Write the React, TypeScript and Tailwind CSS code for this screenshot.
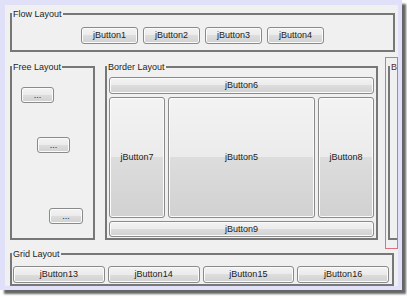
import type { ReactNode } from 'react';

type GroupProps = {
  title: string;
  className?: string;
  children?: ReactNode;
};

function Group({ title, className = '', children }: GroupProps) {
  return (
    <fieldset className={`border-2 border-[#777777] ${className}`}>
      <legend className="px-[1px] text-[9px] leading-[10px] text-[#1e1e1e]">
        {title}
      </legend>
      {children}
    </fieldset>
  );
}

type BtnProps = {
  label: string;
  className?: string;
};

function Btn({ label, className = '' }: BtnProps) {
  return (
    <button
      type="button"
      className={`flex items-center justify-center rounded-[3px] border border-[#8a8a8a] bg-[linear-gradient(#f3f3f3,#ebebeb_50%,#dddddd_50%,#d1d1d1)] shadow-[inset_0_0_0_1px_#fbfbfb] text-[9px] leading-none text-[#222222] ${className}`}
    >
      {label}
    </button>
  );
}

export default function App() {
  return (
    <div className="h-[298px] w-[407px] bg-white font-['Liberation_Sans',Arial,sans-serif]">
      <div className="h-[290px] w-[402px] bg-[#e0e0f8] pt-[5px] pl-[5px] shadow-[4px_4px_2px_#666666]">
        <div className="h-[281px] w-[393px] bg-[#f0f0f0] pt-[4px]">
          {/* flow */}
          <Group title="Flow Layout" className="ml-[5px] h-[43px] w-[385px]">
            <div className="flex justify-center gap-[5px] pt-[8px]">
              <Btn label="jButton1" className="h-[17px] w-[57px]" />
              <Btn label="jButton2" className="h-[17px] w-[57px]" />
              <Btn label="jButton3" className="h-[17px] w-[57px]" />
              <Btn label="jButton4" className="h-[17px] w-[57px]" />
            </div>
          </Group>

          <div className="mt-[5px] flex h-[192px] items-start">
            {/* free */}
            <Group title="Free Layout" className="mt-[5px] ml-[5px] h-[178px] w-[85px]">
              <div className="relative h-[166px]">
                <Btn label="..." className="absolute top-[15px] left-[9px] h-[16px] w-[33px] text-[#4a4a6a]" />
                <Btn label="..." className="absolute top-[65px] left-[25px] h-[16px] w-[33px] text-[#4a4a6a]" />
                <Btn label="..." className="absolute top-[136px] left-[37px] h-[16px] w-[34px] text-[#4a4a6a]" />
              </div>
            </Group>

            {/* border */}
            <Group title="Border Layout" className="mt-[5px] ml-[10px] h-[178px] w-[273px]">
              <div className="flex h-[166px] flex-col gap-[3px] px-[2px] pt-[5px] pb-[1px]">
                <Btn label="jButton6" className="h-[17px] shrink-0" />
                <div className="flex h-[121px] shrink-0 gap-[3px]">
                  <Btn label="jButton7" className="w-[56px]" />
                  <Btn label="jButton5" className="flex-1" />
                  <Btn label="jButton8" className="w-[56px]" />
                </div>
                <Btn label="jButton9" className="h-[16px] shrink-0" />
              </div>
            </Group>

            {/* selected, squeezed panel */}
            <div className="ml-[7px] h-[192px] w-[13px] overflow-hidden border border-[#e2707c]">
              <fieldset className="mt-[4px] ml-[2px] h-[178px] w-[6px] border-2 border-[#777777]">
                <legend className="px-[1px] text-[9px] leading-[10px] whitespace-nowrap text-[#5a2a2a]">
                  Box Layout
                </legend>
              </fieldset>
            </div>
          </div>

          {/* grid */}
          <Group title="Grid Layout" className="ml-[5px] h-[37px] w-[384px]">
            <div className="grid grid-cols-4 gap-[3px] pt-[7px] pr-[3px] pl-[1px]">
              <Btn label="jButton13" className="h-[17px]" />
              <Btn label="jButton14" className="h-[17px]" />
              <Btn label="jButton15" className="h-[17px]" />
              <Btn label="jButton16" className="h-[17px]" />
            </div>
          </Group>
        </div>
      </div>
    </div>
  );
}
